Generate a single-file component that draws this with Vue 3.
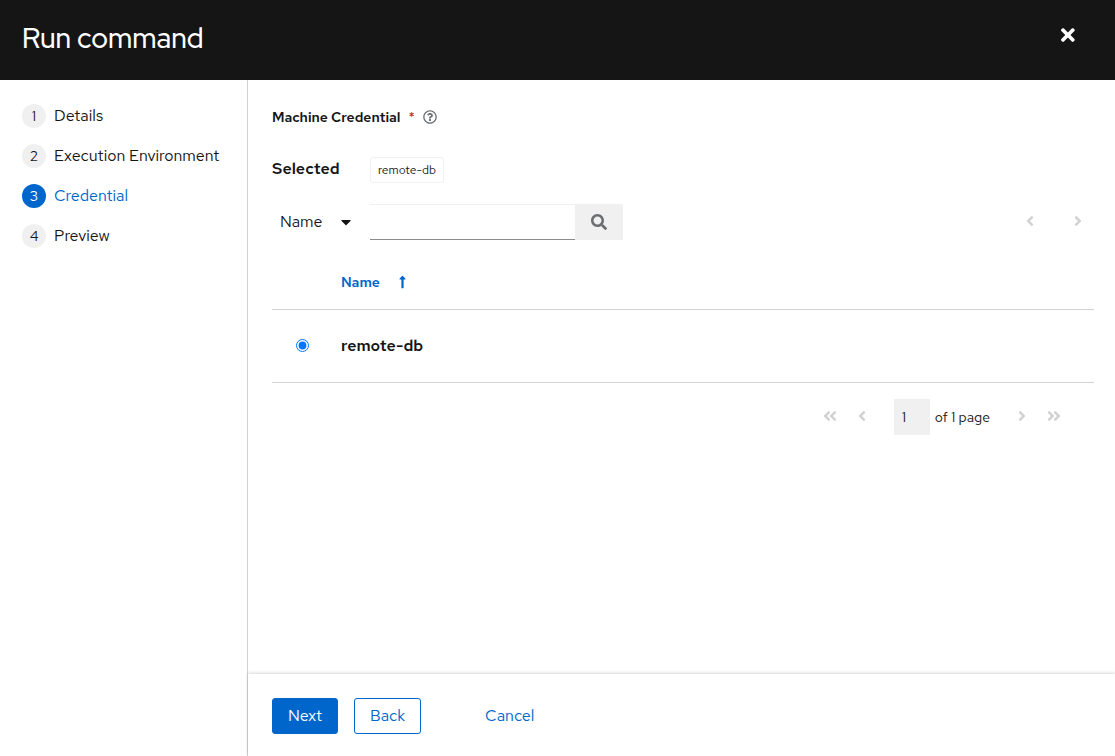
<script setup>
import { ref } from 'vue'

const steps = ['Details', 'Execution Environment', 'Credential', 'Preview']
const current = ref(2)
const searchKey = ref('Name')
const query = ref('')
const page = ref('1')
const selected = ref('remote-db')
const credentials = ['remote-db']

const left =
  'M31.7 239l136-136c9.4-9.4 24.6-9.4 33.9 0l22.6 22.6c9.4 9.4 9.4 24.6 0 33.9L127.9 256l96.4 96.4c9.4 9.4 9.4 24.6 0 33.9L201.7 409c-9.4 9.4-24.6 9.4-33.9 0l-136-136c-9.5-9.4-9.5-24.6-.1-34z'
const right =
  'M224.3 273l-136 136c-9.4 9.4-24.6 9.4-33.9 0l-22.6-22.6c-9.4-9.4-9.4-24.6 0-33.9l96.4-96.4-96.4-96.4c-9.4-9.4-9.4-24.6 0-33.9L54.3 103c9.4-9.4 24.6-9.4 33.9 0l136 136c9.5 9.4 9.5 24.6.1 34z'
</script>

<template>
  <div class="wizard">
    <header class="header">
      <h1 class="title">Run command</h1>
      <button class="plain close" type="button" aria-label="Close">
        <svg class="icon-lg" viewBox="0 0 352 512"><path d="M242.72 256l100.07-100.07c12.28-12.28 12.28-32.19 0-44.48l-22.24-22.24c-12.28-12.28-32.19-12.28-44.48 0L176 189.28 75.93 89.21c-12.28-12.28-32.19-12.28-44.48 0L9.21 111.45c-12.28 12.28-12.28 32.19 0 44.48L109.28 256 9.21 356.07c-12.28 12.28-12.28 32.19 0 44.48l22.24 22.24c12.28 12.28 32.2 12.28 44.48 0L176 322.72l100.07 100.07c12.28 12.28 32.2 12.28 44.48 0l22.24-22.24c12.28-12.28 12.28-32.19 0-44.48L242.72 256z" /></svg>
      </button>
    </header>

    <div class="outer">
      <nav class="nav" aria-label="Steps">
        <ol class="steps">
          <li v-for="(step, i) in steps" :key="step">
            <button
              type="button"
              class="plain step"
              :class="{ current: i === current }"
              :aria-current="i === current ? 'step' : null"
              @click="current = i"
            >
              <span class="num">{{ i + 1 }}</span>
              <span>{{ step }}</span>
            </button>
          </li>
        </ol>
      </nav>

      <div class="content">
        <main class="main">
          <div class="label-row">
            <span class="label">Machine Credential</span>
            <span class="required">*</span>
            <button class="plain help" type="button" aria-label="More information">
              <svg class="icon-sm" viewBox="0 0 512 512"><path d="M256 8C119.043 8 8 119.083 8 256c0 136.997 111.043 248 248 248s248-111.003 248-248C504 119.083 392.957 8 256 8zm0 448c-110.532 0-200-89.431-200-200 0-110.495 89.472-200 200-200 110.491 0 200 89.471 200 200 0 110.53-89.431 200-200 200zm107.244-255.2c0 67.052-72.421 68.084-72.421 92.863V300c0 6.627-5.373 12-12 12h-45.647c-6.627 0-12-5.373-12-12v-8.659c0-35.745 27.1-50.034 47.579-61.516 17.561-9.845 28.324-16.541 28.324-29.579 0-17.246-21.999-28.693-39.784-28.693-23.189 0-33.894 10.977-48.942 29.969-4.057 5.12-11.46 6.071-16.666 2.124l-27.824-21.098c-5.107-3.872-6.251-11.066-2.644-16.363C184.846 131.491 214.94 112 261.794 112c49.071 0 101.45 38.304 101.45 88.8zM298 368c0 23.159-18.841 42-42 42s-42-18.841-42-42 18.841-42 42-42 42 18.841 42 42z" /></svg>
            </button>
          </div>

          <div class="selected-row">
            <strong class="selected-label">Selected</strong>
            <span class="chip">{{ selected }}</span>
          </div>

          <div class="toolbar">
            <div class="key">
              <select v-model="searchKey" class="key-select" aria-label="Search by">
                <option>Name</option>
              </select>
              <svg class="caret" viewBox="0 0 320 512"><path d="M31.3 192h257.3c17.8 0 26.7 21.5 14.1 34.1L174.1 354.8c-7.8 7.8-20.5 7.8-28.3 0L17.2 226.1C4.6 213.5 13.5 192 31.3 192z" /></svg>
            </div>
            <input v-model="query" class="search" type="search" aria-label="Search text" />
            <button class="plain search-btn" type="button" aria-label="Search">
              <svg class="icon" viewBox="0 0 512 512"><path d="M505 442.7L405.3 343c-4.5-4.5-10.6-7-17-7H372c27.6-35.3 44-79.7 44-128C416 93.1 322.9 0 208 0S0 93.1 0 208s93.1 208 208 208c48.3 0 92.7-16.4 128-44v16.3c0 6.4 2.5 12.5 7 17l99.7 99.7c9.4 9.4 24.6 9.4 33.9 0l28.3-28.3c9.4-9.4 9.4-24.6.1-34zM208 336c-70.7 0-128-57.2-128-128 0-70.7 57.2-128 128-128 70.7 0 128 57.2 128 128 0 70.7-57.2 128-128 128z" /></svg>
            </button>
            <div class="compact-pages">
              <button class="plain nav-btn" type="button" disabled aria-label="Previous page">
                <svg class="icon" viewBox="0 0 256 512"><path :d="left" /></svg>
              </button>
              <button class="plain nav-btn" type="button" disabled aria-label="Next page">
                <svg class="icon" viewBox="0 0 256 512"><path :d="right" /></svg>
              </button>
            </div>
          </div>

          <table class="table">
            <thead>
              <tr>
                <td class="pick"></td>
                <th scope="col" aria-sort="ascending">
                  <button class="plain sort" type="button">
                    <span>Name</span>
                    <svg class="icon-sm" viewBox="0 0 256 512"><path d="M88 166.059V468c0 6.627 5.373 12 12 12h56c6.627 0 12-5.373 12-12V166.059h46.059c21.382 0 32.09-25.851 16.971-40.971l-86.059-86.059c-9.373-9.373-24.569-9.373-33.941 0l-86.059 86.059c-15.119 15.119-4.411 40.971 16.971 40.971H88z" /></svg>
                  </button>
                </th>
              </tr>
            </thead>
            <tbody>
              <tr v-for="name in credentials" :key="name">
                <td class="pick">
                  <input :id="name" v-model="selected" class="radio" type="radio" name="credential" :value="name" />
                </td>
                <td><label class="row-name" :for="name">{{ name }}</label></td>
              </tr>
            </tbody>
          </table>

          <nav class="pagination" aria-label="Pagination">
            <button class="plain nav-btn" type="button" disabled aria-label="First page">
              <svg class="icon" viewBox="0 0 448 512"><path :d="left" /><path :d="left" transform="translate(192 0)" /></svg>
            </button>
            <button class="plain nav-btn" type="button" disabled aria-label="Previous page">
              <svg class="icon" viewBox="0 0 256 512"><path :d="left" /></svg>
            </button>
            <div class="page-of">
              <input v-model="page" class="page-input" aria-label="Current page" />
              <span>of 1 page</span>
            </div>
            <button class="plain nav-btn" type="button" disabled aria-label="Next page">
              <svg class="icon" viewBox="0 0 256 512"><path :d="right" /></svg>
            </button>
            <button class="plain nav-btn" type="button" disabled aria-label="Last page">
              <svg class="icon" viewBox="0 0 448 512"><path :d="right" /><path :d="right" transform="translate(192 0)" /></svg>
            </button>
          </nav>
        </main>

        <footer class="footer">
          <button class="btn primary" type="button">Next</button>
          <button class="btn secondary" type="button">Back</button>
          <button class="btn link" type="button">Cancel</button>
        </footer>
      </div>
    </div>
  </div>
</template>

<style>
body {
  background: #fff;
}
</style>

<style scoped>
.wizard {
  display: flex;
  flex-direction: column;
  min-height: 100vh;
  color: #151515;
  font-family: "Red Hat Text", Inter, "Noto Sans", sans-serif;
  font-size: 16px;
  line-height: 24px;
}
.wizard *,
.wizard {
  box-sizing: border-box;
}
button,
input,
select {
  font: inherit;
  color: inherit;
  margin: 0;
}
svg {
  display: block;
  fill: currentColor;
}
.icon { height: 16px; }
.icon-sm { height: 14px; }
.icon-lg { height: 20px; }
.plain {
  display: flex;
  align-items: center;
  justify-content: center;
  padding: 0;
  border: 0;
  background: none;
}
.header {
  display: flex;
  justify-content: space-between;
  align-items: flex-start;
  height: 80px;
  padding: 20px 40px 20px 22px;
  background: #151515;
  color: #fff;
}
.title {
  margin: 0;
  font-family: "Red Hat Display", Inter, "Noto Sans", sans-serif;
  font-size: 28px;
  font-weight: 500;
  line-height: 36px;
}
.close {
  width: 14px;
  height: 30px;
}
.outer {
  display: flex;
  flex: 1;
}
.nav {
  width: 248px;
  padding: 24px 22px;
  border-right: 1px solid #d2d2d2;
}
.steps {
  display: flex;
  flex-direction: column;
  gap: 16px;
  margin: 0;
  padding: 0;
  list-style: none;
}
.step {
  gap: 8px;
  white-space: nowrap;
}
.num {
  width: 24px;
  height: 24px;
  border-radius: 50%;
  background: #f0f0f0;
  font-size: 14px;
  text-align: center;
}
.current { color: #06c; }
.current .num {
  background: #06c;
  color: #fff;
}
.content {
  display: flex;
  flex: 1;
  flex-direction: column;
  min-width: 0;
}
.main {
  flex: 1;
  padding: 24px 21px 24px 24px;
}
.label-row {
  display: flex;
  align-items: center;
  height: 26px;
}
.label {
  font-size: 14px;
  font-weight: 600;
}
.required {
  margin: 0 8px;
  color: #c9190b;
  font-size: 14px;
}
.help { color: #6a6e73; }
.selected-row {
  display: flex;
  align-items: flex-end;
  height: 26px;
  margin-top: 27px;
}
.selected-label {
  width: 98px;
  line-height: 28px;
  font-weight: 600;
}
.chip {
  padding: 0 7px;
  border: 1px solid #f0f0f0;
  border-radius: 3px;
  font-size: 12px;
}
.toolbar {
  display: flex;
  height: 36px;
  margin-top: 21px;
}
.key {
  position: relative;
  width: 98px;
}
.key-select {
  width: 100%;
  height: 36px;
  padding: 0 8px;
  border: 0;
  background: none;
  appearance: none;
}
.caret {
  position: absolute;
  top: 10px;
  right: 19px;
  height: 16px;
  pointer-events: none;
}
.search {
  width: 205px;
  padding: 0 8px;
  border: 0;
  border-top: 1px solid #f0f0f0;
  border-bottom: 1px solid #8a8d90;
  border-radius: 0;
  background: #fff;
  appearance: none;
}
.search-btn {
  width: 48px;
  background: #f0f0f0;
  color: #6a6e73;
}
.compact-pages {
  display: flex;
  gap: 16px;
  margin-left: auto;
}
.table {
  width: 100%;
  margin-top: 16px;
  border-collapse: collapse;
}
.table th,
.table td {
  padding: 0;
  border-bottom: 1px solid #d2d2d2;
  text-align: left;
}
.table thead tr { height: 53px; }
.table tbody tr { height: 73px; }
.table .pick {
  width: 69px;
  padding-left: 24px;
}
.sort {
  gap: 19px;
  color: #06c;
  font-size: 14px;
  font-weight: 600;
}
.radio {
  display: block;
  width: 13px;
  height: 13px;
  accent-color: #0075ff;
}
.row-name { font-weight: 600; }
.pagination {
  display: flex;
  justify-content: flex-end;
  align-items: center;
  margin-top: 16px;
  padding-right: 24px;
  font-size: 14px;
}
.nav-btn {
  width: 32px;
  height: 34px;
  color: #d2d2d2;
}
.pagination .nav-btn {
  align-self: flex-start;
}
.page-of {
  display: flex;
  align-items: center;
  gap: 5px;
  margin: 0 16px;
}
.page-input {
  width: 36px;
  height: 36px;
  padding: 0 8px;
  border: 0;
  background: #f0f0f0;
}
.footer {
  display: flex;
  gap: 16px;
  padding: 24px 24px 22px;
  box-shadow: 0 -1px 3px rgba(3, 3, 3, 0.16);
}
.btn {
  height: 36px;
  padding: 0 15px;
  border: 1px solid #06c;
  border-radius: 3px;
  background: none;
  color: #06c;
}
.primary {
  background: #06c;
  color: #fff;
}
.link {
  margin-left: 32px;
  border-color: transparent;
}
</style>
